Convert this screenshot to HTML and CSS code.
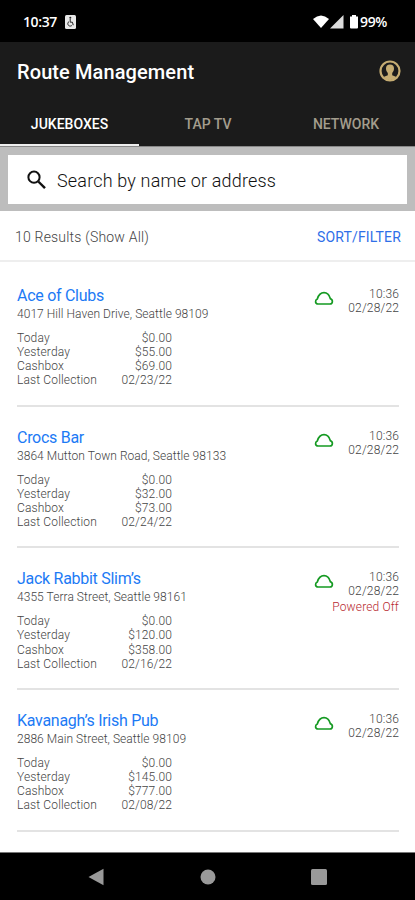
FILE: index.html
```html
<!DOCTYPE html>
<html lang="en">
<head>
    <meta charset="UTF-8">
    <meta name="viewport" content="width=device-width, initial-scale=1.0">
    <title>Route Management</title>
    <link rel="stylesheet" href="styles.css">
</head>
<body>
    <div class="status-bar">
        <span class="clock">10:37</span>
        <svg class="app-icon" width="11" height="14" viewBox="0 0 11 14">
            <rect width="11" height="14" rx="1.5" fill="#e8e8e8"/>
            <circle cx="5.3" cy="2.8" r="1" fill="#222"/>
            <path d="M5.2 4v3.2h2.2l.9 3M4 6.6a2.4 2.4 0 1 0 3.2 3.4" fill="none" stroke="#222" stroke-width="1"/>
        </svg>
        <svg class="signals" width="46" height="14" viewBox="0 0 46 14">
            <path d="M0 4Q8-3.200 16 4L8 13Z" fill="#fff"/>
            <path d="M30.500 0V13.500H17Z" fill="#ddd"/>
            <path d="M39 0h4v1.500h2V12.500a1 1 0 0 1-1 1h-6a1 1 0 0 1-1-1V1.500h2Z" fill="#fff"/>
        </svg>
        <span class="battery">99%</span>
    </div>

    <header class="header">
        <div class="title-row">
            <h1>Route Management</h1>
            <svg width="22" height="22" viewBox="0 0 22 22">
                <circle cx="11" cy="11" r="9.500" fill="none" stroke="#c6ad73" stroke-width="2.200"/>
                <path d="M11 4.500c-2.600 0-4 1.600-4 3.900 0 2 .8 3.400 1.800 4.500v2.300L4.500 17Q11 23.500 17.500 17l-4.300-1.800v-2.300c1-1.100 1.800-2.500 1.800-4.500 0-2.300-1.400-3.900-4-3.900Z" fill="#c6ad73"/>
            </svg>
        </div>
        <nav class="tabs">
            <a class="tab active">JUKEBOXES</a>
            <a class="tab">TAP TV</a>
            <a class="tab">NETWORK</a>
        </nav>
    </header>

    <div class="search">
        <div class="search-box">
            <svg width="20" height="20" viewBox="0 0 20 20" fill="none" stroke="#111" stroke-width="2">
                <circle cx="7" cy="7.200" r="5.600"/>
                <path d="M11.300 11.500L18 18.200" stroke-width="2.400"/>
            </svg>
            <span>Search by name or address</span>
        </div>
    </div>

    <div class="results-bar">
        <span class="count">10 Results (Show All)</span>
        <a class="sort">SORT/FILTER</a>
    </div>

    <main class="list">
        <section class="location">
            <div class="info">
                <h2>Ace of Clubs</h2>
                <p class="address">4017 Hill Haven Drive, Seattle 98109</p>
                <dl>
                    <dt>Today</dt><dd>$0.00</dd>
                    <dt>Yesterday</dt><dd>$55.00</dd>
                    <dt>Cashbox</dt><dd>$69.00</dd>
                    <dt>Last Collection</dt><dd>02/23/22</dd>
                </dl>
            </div>
            <svg class="cloud" width="20" height="15" viewBox="0 0 20 15"><path d="M4 13C1 13 .8 9.200 3.300 8 4.500 4 7 1.700 10 1.700S15.300 4 16.300 7.600C19.200 8.700 19 13 16 13Z"/></svg>
            <div class="seen">10:36<br>02/28/22</div>
        </section>

        <section class="location">
            <div class="info">
                <h2>Crocs Bar</h2>
                <p class="address">3864 Mutton Town Road, Seattle 98133</p>
                <dl>
                    <dt>Today</dt><dd>$0.00</dd>
                    <dt>Yesterday</dt><dd>$32.00</dd>
                    <dt>Cashbox</dt><dd>$73.00</dd>
                    <dt>Last Collection</dt><dd>02/24/22</dd>
                </dl>
            </div>
            <svg class="cloud" width="20" height="15" viewBox="0 0 20 15"><path d="M4 13C1 13 .8 9.200 3.300 8 4.500 4 7 1.700 10 1.700S15.300 4 16.300 7.600C19.200 8.700 19 13 16 13Z"/></svg>
            <div class="seen">10:36<br>02/28/22</div>
        </section>

        <section class="location">
            <div class="info">
                <h2>Jack Rabbit Slim’s</h2>
                <p class="address">4355 Terra Street, Seattle 98161</p>
                <dl>
                    <dt>Today</dt><dd>$0.00</dd>
                    <dt>Yesterday</dt><dd>$120.00</dd>
                    <dt>Cashbox</dt><dd>$358.00</dd>
                    <dt>Last Collection</dt><dd>02/16/22</dd>
                </dl>
            </div>
            <svg class="cloud" width="20" height="15" viewBox="0 0 20 15"><path d="M4 13C1 13 .8 9.200 3.300 8 4.500 4 7 1.700 10 1.700S15.300 4 16.300 7.600C19.200 8.700 19 13 16 13Z"/></svg>
            <div class="seen">10:36<br>02/28/22<div class="off">Powered Off</div></div>
        </section>

        <section class="location">
            <div class="info">
                <h2>Kavanagh’s Irish Pub</h2>
                <p class="address">2886 Main Street, Seattle 98109</p>
                <dl>
                    <dt>Today</dt><dd>$0.00</dd>
                    <dt>Yesterday</dt><dd>$145.00</dd>
                    <dt>Cashbox</dt><dd>$777.00</dd>
                    <dt>Last Collection</dt><dd>02/08/22</dd>
                </dl>
            </div>
            <svg class="cloud" width="20" height="15" viewBox="0 0 20 15"><path d="M4 13C1 13 .8 9.200 3.300 8 4.500 4 7 1.700 10 1.700S15.300 4 16.300 7.600C19.200 8.700 19 13 16 13Z"/></svg>
            <div class="seen">10:36<br>02/28/22</div>
        </section>
    </main>

    <footer class="nav-bar">
        <svg width="16" height="18" viewBox="0 0 16 18"><path d="M15.500 .8V17.200L.5 9Z"/></svg>
        <svg width="16" height="16" viewBox="0 0 16 16"><circle cx="8" cy="8" r="7.500"/></svg>
        <svg width="16" height="16" viewBox="0 0 16 16"><rect width="16" height="16" rx="1.500"/></svg>
    </footer>
</body>
</html>
```
FILE: styles.css
```css
* {
    box-sizing: border-box;
}
body {
    margin: 0;
    height: 900px;
    display: flex;
    flex-direction: column;
    overflow: hidden;
    background: #fff;
    font-family: Roboto, sans-serif;
    color: #444;
}
h1, h2, p, dl, dd {
    margin: 0;
}
svg {
    display: block;
    flex: none;
}
.status-bar {
    height: 42px;
    padding: 1px 28px 0 23px;
    display: flex;
    align-items: center;
    background: #000;
    color: #fff;
    font: 600 14px "Open Sans", sans-serif;
}
.clock {
    letter-spacing: -0.4px;
}
.app-icon {
    margin-left: 8px;
}
.signals {
    margin-left: auto;
    margin-right: 1px;
}
.battery {
    letter-spacing: -0.4px;
}
.header {
    height: 105px;
    display: flex;
    flex-direction: column;
    background: #1b1b1b;
}
.title-row {
    height: 58px;
    padding: 0 14px 0 17px;
    display: flex;
    align-items: center;
    justify-content: space-between;
}
h1 {
    font-size: 20px;
    font-weight: 500;
    line-height: 24px;
    letter-spacing: 0.1px;
    padding-top: 1px;
    color: #fff;
}
.tabs {
    flex: 1;
    display: grid;
    grid-template-columns: 139px 1fr 138px;
    border-bottom: 1px solid #888;
}
.tab {
    padding-top: 15px;
    text-align: center;
    font-size: 14px;
    font-weight: 500;
    line-height: 18px;
    color: #a39d8d;
}
.active {
    border-bottom: 2px solid #eee;
    color: #fff;
}
.search {
    height: 64px;
    padding: 8px 8px 7px;
    background: #bdbdbd;
}
.search-box {
    height: 49px;
    padding: 1px 0 0 19px;
    display: flex;
    align-items: center;
    gap: 10px;
    background: #fff;
    font-size: 18px;
    font-weight: 300;
    letter-spacing: 0.17px;
    color: #111;
}
.results-bar {
    height: 51px;
    padding: 2px 14px 0 15px;
    display: flex;
    align-items: center;
    justify-content: space-between;
    border-bottom: 2px solid #eee;
    font-size: 14px;
}
.count {
    font-weight: 300;
    letter-spacing: 0.2px;
}
.sort {
    letter-spacing: 0.15px;
    color: #2f6fe8;
}
.list {
    flex: 1;
    padding: 3px 16px 0 17px;
}
.location {
    height: 141.7px;
    padding-top: 21px;
    display: flex;
    border-bottom: 2px solid #e3e3e3;
}
.info {
    flex: 1;
}
h2 {
    font-size: 16px;
    font-weight: 400;
    line-height: 20px;
    letter-spacing: -0.28px;
    color: #1c7af5;
}
.address {
    font-size: 12px;
    font-weight: 300;
    line-height: 16px;
    letter-spacing: 0.05px;
}
dl {
    width: 155px;
    padding-top: 9px;
    display: grid;
    grid-template-columns: auto auto;
    font-size: 12px;
    font-weight: 300;
    line-height: 14.1px;
    letter-spacing: 0.14px;
}
dd {
    text-align: right;
}
.cloud {
    margin-top: 5px;
    fill: none;
    stroke: #159a22;
    stroke-width: 1.7;
}
.seen {
    width: 65px;
    padding-top: 1px;
    text-align: right;
    white-space: nowrap;
    font-size: 12px;
    font-weight: 300;
    line-height: 14.1px;
    letter-spacing: 0.15px;
}
.off {
    margin-top: 1px;
    display: flex;
    justify-content: flex-end;
    color: #b82a30;
}
.nav-bar {
    height: 48px;
    padding: 0 88px;
    display: flex;
    align-items: center;
    justify-content: space-between;
    background: #000;
    border-top: 1px solid #777;
    fill: #999;
}
```
